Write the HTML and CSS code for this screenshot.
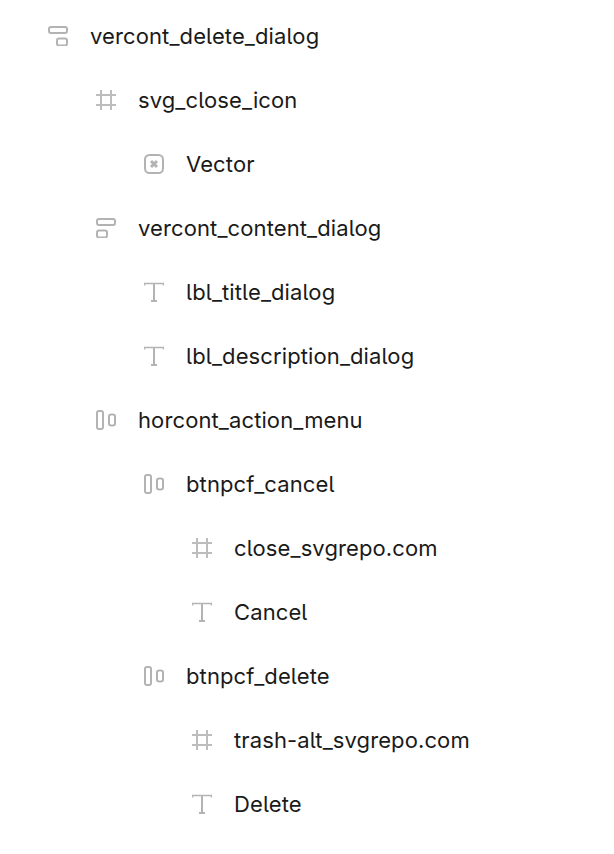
FILE: index.html
```html
<!DOCTYPE html>
<html lang="en">
<head>
    <meta charset="UTF-8">
    <meta name="viewport" content="width=device-width, initial-scale=1.0">
    <title>Layers</title>
    <link rel="stylesheet" href="styles.css">
</head>
<body>
    <svg class="defs" width="0" height="0">
        <symbol id="i-stack-right" viewBox="0 0 20 20">
            <rect x="1" y="1" width="18" height="6" rx="2"/>
            <rect x="9" y="12.5" width="10" height="7" rx="2"/>
        </symbol>
        <symbol id="i-stack-left" viewBox="0 0 20 20">
            <rect x="1" y="1" width="18" height="6" rx="2"/>
            <rect x="1" y="12.5" width="10" height="7" rx="2"/>
        </symbol>
        <symbol id="i-row" viewBox="0 0 20 20">
            <rect x="1" y="1" width="6" height="18" rx="2"/>
            <rect x="13" y="4.5" width="6" height="11" rx="2"/>
        </symbol>
        <symbol id="i-frame" viewBox="0 0 20 20">
            <path class="grid" d="M5 0v20M15 0v20M0 5h20M0 15h20"/>
        </symbol>
        <symbol id="i-vector" viewBox="0 0 20 20">
            <rect x="1" y="1" width="18" height="18" rx="4.5"/>
            <path class="cross" d="M7 7l6 6M13 7l-6 6"/>
        </symbol>
        <symbol id="i-text" viewBox="0 0 20 20">
            <path class="bar" d="M0.5 3.5V1.5h19v2"/>
            <path class="stem" d="M10 1.5V19M7 19h6"/>
        </symbol>
    </svg>

    <ul class="tree">
        <li class="row depth-0"><svg class="icon"><use href="#i-stack-right"/></svg><span>vercont_delete_dialog</span></li>
        <li class="row depth-1"><svg class="icon"><use href="#i-frame"/></svg><span>svg_close_icon</span></li>
        <li class="row depth-2"><svg class="icon"><use href="#i-vector"/></svg><span>Vector</span></li>
        <li class="row depth-1"><svg class="icon"><use href="#i-stack-left"/></svg><span>vercont_content_dialog</span></li>
        <li class="row depth-2"><svg class="icon"><use href="#i-text"/></svg><span>lbl_title_dialog</span></li>
        <li class="row depth-2"><svg class="icon"><use href="#i-text"/></svg><span>lbl_description_dialog</span></li>
        <li class="row depth-1"><svg class="icon"><use href="#i-row"/></svg><span>horcont_action_menu</span></li>
        <li class="row depth-2"><svg class="icon"><use href="#i-row"/></svg><span>btnpcf_cancel</span></li>
        <li class="row depth-3"><svg class="icon"><use href="#i-frame"/></svg><span>close_svgrepo.com</span></li>
        <li class="row depth-3"><svg class="icon"><use href="#i-text"/></svg><span>Cancel</span></li>
        <li class="row depth-2"><svg class="icon"><use href="#i-row"/></svg><span>btnpcf_delete</span></li>
        <li class="row depth-3"><svg class="icon"><use href="#i-frame"/></svg><span>trash-alt_svgrepo.com</span></li>
        <li class="row depth-3"><svg class="icon"><use href="#i-text"/></svg><span>Delete</span></li>
    </ul>
</body>
</html>
```

FILE: styles.css
```css
body {
    margin: 0;
    padding: 0;
    background-color: #fff;
    color: #1a1a1a;
    font-family: 'Inter', 'Liberation Sans', sans-serif;
    font-size: 22px;
    letter-spacing: 0.11px;
    font-feature-settings: "cv05";
}

.defs {
    position: absolute;
}

.tree {
    list-style: none;
    margin: 0;
    padding: 4px 0 0;
}

.row {
    display: flex;
    align-items: center;
    gap: 22px;
    height: 64px;
}

.depth-0 { padding-left: 48px; }
.depth-1 { padding-left: 96px; }
.depth-2 { padding-left: 144px; }
.depth-3 { padding-left: 192px; }

.icon {
    width: 20px;
    height: 20px;
    flex: none;
    fill: none;
    stroke: #b3b3b3;
    stroke-width: 2;
}

.grid {
    stroke: #bdbdbd;
}

.bar {
    stroke-width: 1.5;
}

.stem {
    stroke-width: 2;
}

.cross {
    stroke-width: 3;
}
```
